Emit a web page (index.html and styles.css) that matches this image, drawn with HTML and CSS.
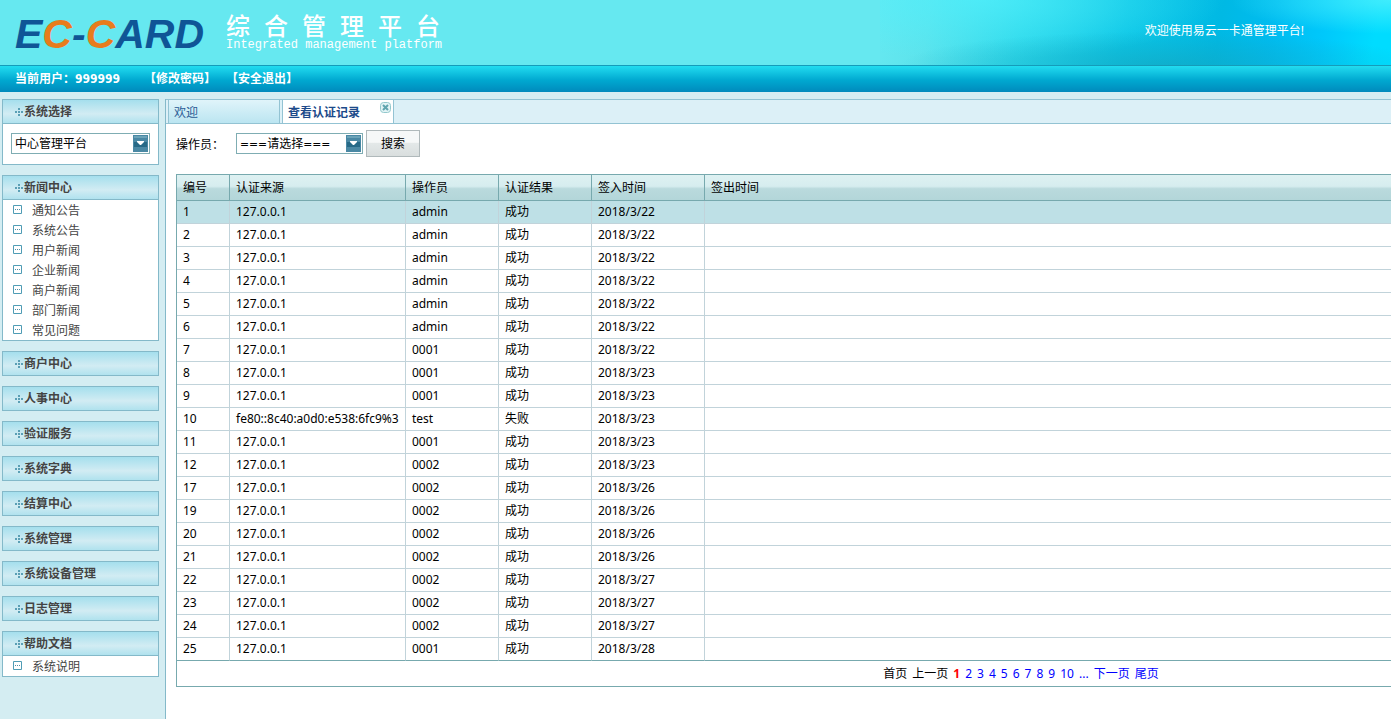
FILE: index.html
```html
<!DOCTYPE html>
<html lang="zh-CN">
<head>
<meta charset="utf-8">
<title>综合管理平台</title>
<link rel="stylesheet" href="styles.css">
</head>
<body>
<header class="banner">
  <div class="logo">E<span class="orange">C</span>-<span class="orange">C</span>ARD</div>
  <div class="titles">
    <h1 class="title"><span>综</span><span>合</span><span>管</span><span>理</span><span>平</span><span>台</span></h1>
    <p class="subtitle">Integrated management platform</p>
  </div>
  <p class="welcome">欢迎使用易云一卡通管理平台!</p>
</header>
<nav class="userbar">
  <span class="user">当前用户：999999</span>
  <a href="#">【修改密码】</a>
  <a href="#">【安全退出】</a>
</nav>
<svg class="defs" width="0" height="0" aria-hidden="true">
  <symbol id="dots" viewBox="0 0 8 8"><path fill="#5a9fb5" d="M3 0h2v2H3zM0 3h2v2H0zM3 3h2v2H3zM6 3h2v2H6zM3 6h2v2H3z"/></symbol>
  <symbol id="leaf" viewBox="0 0 9 9"><path fill="#fff" stroke="#4f9cb5" d="M.5 .5h8v8h-8z"/><path fill="#4f8ca5" d="M2 4h1v1H2zM4 4h1v1H4zM6 4h1v1H6z"/></symbol>
  <symbol id="arrow" viewBox="0 0 15 17"><path fill="#4a88a4" d="M0 0h15v17H0z"/><path fill="#266987" d="M1 7h13v5H1z"/><path fill="#6ba3b8" d="M1 1h13v2H1z"/><path fill="#fff" d="M4 6h7v1l-3 3H7L4 7z"/></symbol>
</svg>
<div class="body">
  <aside class="side">
    <section class="panel">
      <h2 class="head"><svg class="dots"><use href="#dots"/></svg>系统选择</h2>
      <div class="picker">
        <span class="drop"><select aria-label="系统选择"><option>中心管理平台</option></select><svg class="arrow"><use href="#arrow"/></svg></span>
      </div>
    </section>
    <section class="panel">
      <h2 class="head"><svg class="dots"><use href="#dots"/></svg>新闻中心</h2>
      <ul class="menu">
        <li><svg class="leaf"><use href="#leaf"/></svg><a href="#">通知公告</a></li>
        <li><svg class="leaf"><use href="#leaf"/></svg><a href="#">系统公告</a></li>
        <li><svg class="leaf"><use href="#leaf"/></svg><a href="#">用户新闻</a></li>
        <li><svg class="leaf"><use href="#leaf"/></svg><a href="#">企业新闻</a></li>
        <li><svg class="leaf"><use href="#leaf"/></svg><a href="#">商户新闻</a></li>
        <li><svg class="leaf"><use href="#leaf"/></svg><a href="#">部门新闻</a></li>
        <li><svg class="leaf"><use href="#leaf"/></svg><a href="#">常见问题</a></li>
      </ul>
    </section>
    <section class="panel closed"><h2 class="head"><svg class="dots"><use href="#dots"/></svg>商户中心</h2></section>
    <section class="panel closed"><h2 class="head"><svg class="dots"><use href="#dots"/></svg>人事中心</h2></section>
    <section class="panel closed"><h2 class="head"><svg class="dots"><use href="#dots"/></svg>验证服务</h2></section>
    <section class="panel closed"><h2 class="head"><svg class="dots"><use href="#dots"/></svg>系统字典</h2></section>
    <section class="panel closed"><h2 class="head"><svg class="dots"><use href="#dots"/></svg>结算中心</h2></section>
    <section class="panel closed"><h2 class="head"><svg class="dots"><use href="#dots"/></svg>系统管理</h2></section>
    <section class="panel closed"><h2 class="head"><svg class="dots"><use href="#dots"/></svg>系统设备管理</h2></section>
    <section class="panel closed"><h2 class="head"><svg class="dots"><use href="#dots"/></svg>日志管理</h2></section>
    <section class="panel">
      <h2 class="head"><svg class="dots"><use href="#dots"/></svg>帮助文档</h2>
      <ul class="menu">
        <li><svg class="leaf"><use href="#leaf"/></svg><a href="#">系统说明</a></li>
      </ul>
    </section>
  </aside>
  <main class="main">
    <div class="tabs">
      <a class="tab" href="#">欢迎</a>
      <a class="tab active" href="#">查看认证记录<svg class="close" viewBox="0 0 11 11"><rect x=".5" y=".5" width="10" height="10" rx="3" fill="#e2f3f5" stroke="#93c8cc"/><path d="M3 3l5 5M8 3l-5 5" stroke="#5fa4ae" stroke-width="2"/></svg></a>
    </div>
    <form class="search">
      <label for="operator">操作员：</label>
      <span class="drop wide"><select id="operator"><option>===请选择===</option></select><svg class="arrow"><use href="#arrow"/></svg></span>
      <button type="button">搜索</button>
    </form>
    <div class="grid">
      <table>
        <colgroup><col class="c-id"><col class="c-source"><col class="c-mid"><col class="c-mid"><col class="c-time"><col></colgroup>
        <thead><tr><th>编号</th><th>认证来源</th><th>操作员</th><th>认证结果</th><th>签入时间</th><th>签出时间</th></tr></thead>
        <tbody>
          <tr class="selected"><td>1</td><td>127.0.0.1</td><td>admin</td><td>成功</td><td>2018/3/22</td><td></td></tr>
          <tr><td>2</td><td>127.0.0.1</td><td>admin</td><td>成功</td><td>2018/3/22</td><td></td></tr>
          <tr><td>3</td><td>127.0.0.1</td><td>admin</td><td>成功</td><td>2018/3/22</td><td></td></tr>
          <tr><td>4</td><td>127.0.0.1</td><td>admin</td><td>成功</td><td>2018/3/22</td><td></td></tr>
          <tr><td>5</td><td>127.0.0.1</td><td>admin</td><td>成功</td><td>2018/3/22</td><td></td></tr>
          <tr><td>6</td><td>127.0.0.1</td><td>admin</td><td>成功</td><td>2018/3/22</td><td></td></tr>
          <tr><td>7</td><td>127.0.0.1</td><td>0001</td><td>成功</td><td>2018/3/22</td><td></td></tr>
          <tr><td>8</td><td>127.0.0.1</td><td>0001</td><td>成功</td><td>2018/3/23</td><td></td></tr>
          <tr><td>9</td><td>127.0.0.1</td><td>0001</td><td>成功</td><td>2018/3/23</td><td></td></tr>
          <tr><td>10</td><td>fe80::8c40:a0d0:e538:6fc9%3</td><td>test</td><td>失败</td><td>2018/3/23</td><td></td></tr>
          <tr><td>11</td><td>127.0.0.1</td><td>0001</td><td>成功</td><td>2018/3/23</td><td></td></tr>
          <tr><td>12</td><td>127.0.0.1</td><td>0002</td><td>成功</td><td>2018/3/23</td><td></td></tr>
          <tr><td>17</td><td>127.0.0.1</td><td>0002</td><td>成功</td><td>2018/3/26</td><td></td></tr>
          <tr><td>19</td><td>127.0.0.1</td><td>0002</td><td>成功</td><td>2018/3/26</td><td></td></tr>
          <tr><td>20</td><td>127.0.0.1</td><td>0002</td><td>成功</td><td>2018/3/26</td><td></td></tr>
          <tr><td>21</td><td>127.0.0.1</td><td>0002</td><td>成功</td><td>2018/3/26</td><td></td></tr>
          <tr><td>22</td><td>127.0.0.1</td><td>0002</td><td>成功</td><td>2018/3/27</td><td></td></tr>
          <tr><td>23</td><td>127.0.0.1</td><td>0002</td><td>成功</td><td>2018/3/27</td><td></td></tr>
          <tr><td>24</td><td>127.0.0.1</td><td>0002</td><td>成功</td><td>2018/3/27</td><td></td></tr>
          <tr><td>25</td><td>127.0.0.1</td><td>0001</td><td>成功</td><td>2018/3/28</td><td></td></tr>
        </tbody>
      </table>
      <nav class="pager" aria-label="分页">
        <span>首页</span><span>上一页</span><b>1</b><a href="#">2</a><a href="#">3</a><a href="#">4</a><a href="#">5</a><a href="#">6</a><a href="#">7</a><a href="#">8</a><a href="#">9</a><a href="#">10</a><a href="#">...</a><a href="#">下一页</a><a href="#">尾页</a>
      </nav>
    </div>
  </main>
</div>
</body>
</html>
```
FILE: styles.css
```css
* { box-sizing: border-box; }

body {
  margin: 0;
  min-height: 100vh;
  display: flex;
  flex-direction: column;
  overflow: hidden;
  background: #d4edf2;
  color: #000;
  font: 12px/18px "Noto Sans", "Noto Sans CJK SC", sans-serif;
}

h1, h2, p, ul { margin: 0; padding: 0; }
ul { list-style: none; }
a { color: inherit; text-decoration: none; }
.defs { position: absolute; }

.banner {
  display: flex;
  align-items: flex-start;
  height: 65px;
  padding: 0 87px 0 15px;
  color: #fff;
  background:
    radial-gradient(ellipse 160px 34px at 100% 0, rgba(70, 238, 252, .9), transparent) no-repeat,
    radial-gradient(ellipse 260px 34px at 55% 100%, rgba(20, 165, 190, .6), transparent) right / 511px 100% no-repeat,
    radial-gradient(ellipse 240px 60px at 20% 0, rgba(80, 240, 252, .7), transparent) right / 511px 100% no-repeat,
    linear-gradient(100deg, #66e8f0 0, #5ce3ec 10%, #2ed8ea 28%, #0cc6e6 48%, #00b9e4 66%, #00bcf0 76%, #00c8fb 86%, #00dcff 96%) right / 511px 100% no-repeat,
    #66e8f0;
}

.logo {
  width: 211px;
  padding-top: 11px;
  color: #0f5596;
  font: italic bold 41px/46px "Liberation Sans", sans-serif;
}
.orange { color: #e87c1c; }

.titles { padding-top: 13px; }
.title {
  display: flex;
  gap: 14px;
  font: 500 24px/24px "Noto Sans CJK SC", sans-serif;
}
.title span { height: 24px; }
.subtitle { padding-top: 2px; font: 12px/12px "Liberation Mono", monospace; }
.welcome { margin-left: auto; padding-top: 22px; }

.userbar {
  display: flex;
  height: 27px;
  padding: 3px 15px 0;
  border-top: 1px solid #159cba;
  background: linear-gradient(#22dcf0, #00a8d0 55%, #008abc);
  color: #fff;
  font: bold 12px/20px "DejaVu Sans Condensed", "Noto Sans CJK SC", sans-serif;
}
.user { margin-right: 24px; }
.userbar a + a { margin-left: 10px; }

.body { flex: 1; display: flex; padding-top: 7px; }

.side {
  flex: none;
  width: 165px;
  padding: 0 6px 0 2px;
  display: flex;
  flex-direction: column;
  gap: 10px;
}
.panel { border: 1px solid #84b9c9; background: #fff; }
.head {
  display: flex;
  align-items: center;
  gap: 1px;
  height: 24px;
  padding-left: 12px;
  border-bottom: 1px solid #84b9c9;
  background: linear-gradient(#a5dfed, #d2ecf3 60%, #b0e2ee);
  color: #444;
  font-size: 12px;
  line-height: 23px;
}
.closed .head { height: 23px; border-bottom: 0; }
.dots { width: 8px; height: 8px; }
.picker { padding: 9px 8px 10px; }

.drop { position: relative; display: block; height: 21px; }
.drop select {
  width: 100%;
  height: 21px;
  padding: 1px 3px 0;
  border: 1px solid #7fadb3;
  border-radius: 0;
  appearance: none;
  background: #fff;
  color: #000;
  font: 12px "DejaVu Sans Condensed", "Noto Sans CJK SC", sans-serif;
}
.arrow {
  position: absolute;
  top: 2px;
  right: 2px;
  width: 15px;
  height: 17px;
  pointer-events: none;
}

.menu li {
  display: flex;
  align-items: flex-start;
  gap: 10px;
  height: 20px;
  padding-left: 10px;
  color: #444;
  line-height: 22px;
}
.leaf { width: 9px; height: 9px; margin-top: 5px; }

.main {
  flex: 1;
  min-width: 0;
  overflow: hidden;
  border-left: 1px solid #84b9c9;
  background: #fff;
}
.tabs {
  display: flex;
  gap: 2px;
  height: 25px;
  padding-left: 2px;
  border: solid #93c3d3;
  border-width: 1px 0;
  background: #dcf0f7;
}
.tab {
  position: relative;
  width: 112px;
  padding: 2px 5px;
  border: solid #93c3d3;
  border-width: 0 1px;
  background: linear-gradient(#e0f4fa, #bbe5f1);
  color: #2a5a94;
  line-height: 22px;
}
.tab.active { background: #fff; color: #1c4a8a; font-weight: bold; }
.close { position: absolute; top: 2px; right: 2px; width: 11px; height: 11px; }

.search {
  display: flex;
  align-items: center;
  padding: 6px 10px 0;
}
.search label { width: 60px; line-height: 20px; padding-top: 2px; }
.search .wide { width: 127px; }
.search button {
  width: 54px;
  height: 27px;
  margin-left: 3px;
  padding: 0;
  border: 1px solid #b0b9bb;
  background: linear-gradient(#f6f8f8 45%, #e3e8e8 50%, #d9dede);
  font: inherit;
}

.grid {
  width: 1690px;
  margin: 17px 0 0 10px;
  border: 1px solid #77a9ae;
}
table { width: 100%; table-layout: fixed; border-collapse: separate; border-spacing: 0; }
.c-id { width: 53px; }
.c-source { width: 176px; }
.c-mid { width: 93px; }
.c-time { width: 113px; }
th, td {
  padding: 0 6px;
  border: solid #c1d3da;
  border-width: 0 1px 1px 0;
  text-align: left;
  white-space: nowrap;
}
th {
  height: 26px;
  border-color: #77a9ae;
  background: linear-gradient(#def1f2, #d6edef 45%, #badadd 55%, #b3d6d9);
  font-weight: normal;
}
td { height: 23px; line-height: 22px; }
.selected td { background: #bee0e6; }
tbody tr:last-child td { border-bottom-color: #77a9ae; }
th:last-child, td:last-child { border-right: 0; }

.pager { display: flex; justify-content: center; gap: 5px; height: 25px; line-height: 25px; }
.pager b { color: #f00; }
.pager a { color: #00f; }
```
